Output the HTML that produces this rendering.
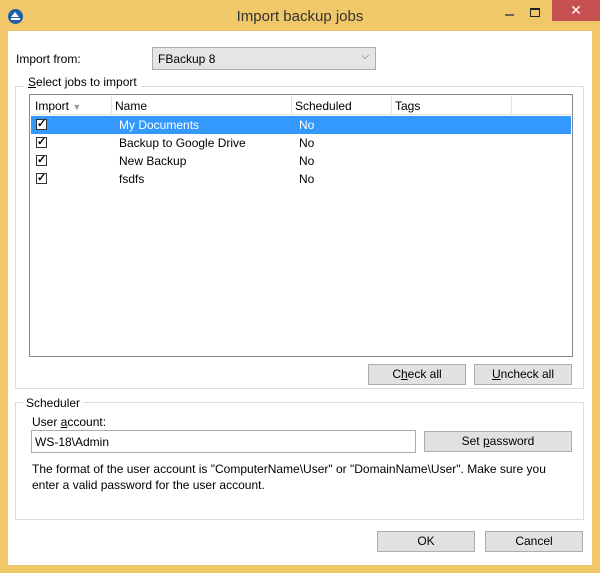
<!DOCTYPE html><html><head><style>
body{margin:0;width:600px;height:573px;background:#f0c869;font-family:"Liberation Sans",sans-serif;font-size:12px;color:#000;position:relative;overflow:hidden}
.a{position:absolute}
.btn{position:absolute;background:#e1e1e1;border:1px solid #adadad;box-sizing:border-box;text-align:center;line-height:19px}
.gb{position:absolute;border:1px solid #dcdcdc;box-sizing:border-box}
.cb{position:absolute;left:6px;width:11px;height:11px;background:#fff;border:1px solid #333;box-sizing:border-box;font-size:11px;line-height:9px;text-align:center;font-weight:bold}
u{text-decoration:underline}
</style></head><body>
<div class="a" style="left:8px;top:9px;width:15px;height:15px;border-radius:50%;background:#1e5fa8"></div>
<div class="a" style="left:11px;top:12px;width:0;height:0;border-left:4.5px solid transparent;border-right:4.5px solid transparent;border-bottom:5px solid #fff"></div>
<div class="a" style="left:11px;top:18px;width:9px;height:2px;background:#fff"></div>
<div class="a" style="left:0;top:8px;width:600px;text-align:center;font-size:15px;color:#333">Import backup jobs</div>
<div class="a" style="left:505px;top:14px;width:9px;height:2px;background:#666"></div>
<div class="a" style="left:530px;top:8px;width:10px;height:9px;border:1px solid #222;border-top-width:2px;box-sizing:border-box"></div>
<div class="a" style="left:552px;top:0;width:48px;height:21px;background:#c75050;color:#fff;text-align:center;font-size:14px;line-height:21px">✕</div>
<div class="a" style="left:8px;top:31px;width:584px;height:534px;background:#fff"></div>
<div class="a" style="left:16px;top:52px">Import from:</div>
<div class="a" style="left:152px;top:47px;width:224px;height:23px;border:1px solid #acacac;box-sizing:border-box;background:#e5e5e5;padding:4px 0 0 5px">FBackup 8<span style="position:absolute;right:6px;top:3px;color:#555;font-size:10px">⌵</span></div>
<div class="gb" style="left:15px;top:86px;width:569px;height:303px"></div>
<div class="a" style="left:24px;top:75px;background:#fff;padding:0 4px"><u>S</u>elect jobs to import</div>
<div class="a" style="left:29px;top:94px;width:544px;height:263px;border:1px solid #828790;box-sizing:border-box;background:#fff">
<div class="a" style="left:0;top:0;width:542px;height:19px;border-bottom:1px solid #e5e5e5"></div>
<div class="a" style="left:5px;top:4px">Import <span style="color:#999;font-size:9px">▼</span></div>
<div class="a" style="left:81px;top:0;width:1px;height:19px;background:#e5e5e5"></div>
<div class="a" style="left:85px;top:4px">Name</div>
<div class="a" style="left:261px;top:0;width:1px;height:19px;background:#e5e5e5"></div>
<div class="a" style="left:265px;top:4px">Scheduled</div>
<div class="a" style="left:361px;top:0;width:1px;height:19px;background:#e5e5e5"></div>
<div class="a" style="left:365px;top:4px">Tags</div>
<div class="a" style="left:481px;top:0;width:1px;height:19px;background:#e5e5e5"></div>
<div class="a" style="left:1px;top:21px;width:540px;height:18px;background:#3399ff"></div>
<div class="a" style="left:0;top:21px;width:542px;height:18px;color:#fff"><div class="cb" style="top:3px;color:#000">✓</div><span class="a" style="left:89px;top:2px">My Documents</span><span class="a" style="left:269px;top:2px">No</span></div>
<div class="a" style="left:0;top:39px;width:542px;height:18px"><div class="cb" style="top:3px">✓</div><span class="a" style="left:89px;top:2px">Backup to Google Drive</span><span class="a" style="left:269px;top:2px">No</span></div>
<div class="a" style="left:0;top:57px;width:542px;height:18px"><div class="cb" style="top:3px">✓</div><span class="a" style="left:89px;top:2px">New Backup</span><span class="a" style="left:269px;top:2px">No</span></div>
<div class="a" style="left:0;top:75px;width:542px;height:18px"><div class="cb" style="top:3px">✓</div><span class="a" style="left:89px;top:2px">fsdfs</span><span class="a" style="left:269px;top:2px">No</span></div>
</div>
<div class="btn" style="left:368px;top:364px;width:98px;height:21px">C<u>h</u>eck all</div>
<div class="btn" style="left:474px;top:364px;width:98px;height:21px"><u>U</u>ncheck all</div>
<div class="gb" style="left:15px;top:402px;width:569px;height:118px"></div>
<div class="a" style="left:23px;top:396px;background:#fff;padding:0 3px">Scheduler</div>
<div class="a" style="left:32px;top:415px">User <u>a</u>ccount:</div>
<div class="a" style="left:31px;top:430px;width:385px;height:23px;border:1px solid #acacac;box-sizing:border-box;padding:4px 0 0 3px">WS-18\Admin</div>
<div class="btn" style="left:424px;top:431px;width:148px;height:21px">Set <u>p</u>assword</div>
<div class="a" style="left:32px;top:461px;line-height:16px">The format of the user account is "ComputerName\User" or "DomainName\User". Make sure you<br>enter a valid password for the user account.</div>
<div class="btn" style="left:377px;top:531px;width:98px;height:21px">OK</div>
<div class="btn" style="left:485px;top:531px;width:98px;height:21px">Cancel</div>
</body></html>
